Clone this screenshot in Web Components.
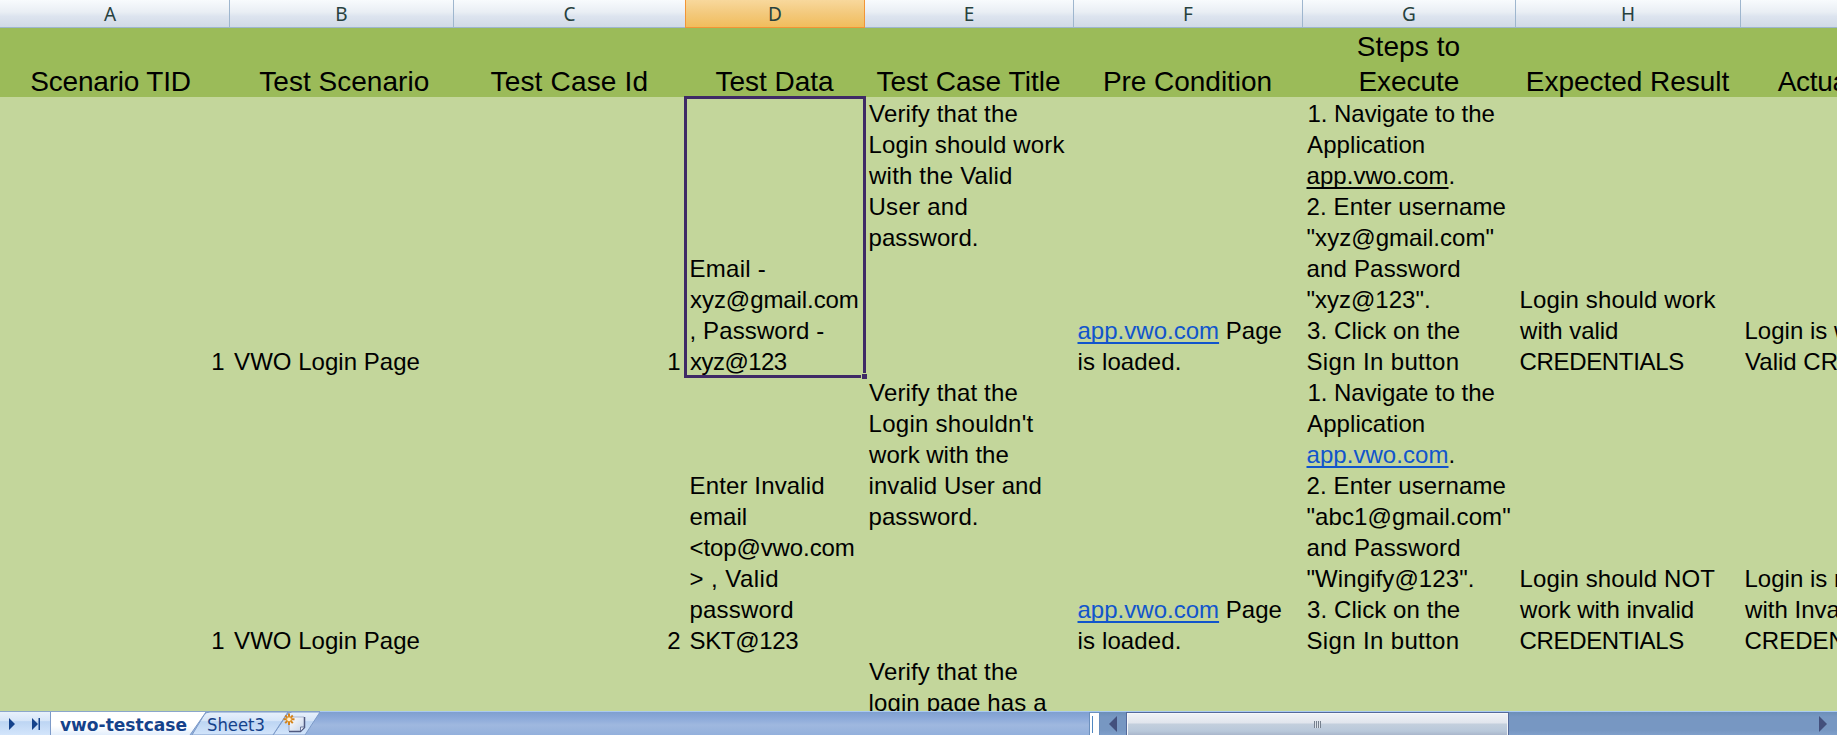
<!DOCTYPE html>
<html lang="en">
<head>
<meta charset="utf-8">
<title>vwo-testcase</title>
<style>
html, body { margin: 0; height: 100%; overflow: hidden; }
body { font-family: "Liberation Sans", Arial, sans-serif; color: #000; background: #c3d69b; }
</style>
</head>
<body>
<work-book>
  <sheet-row kind="columns">
    <column-head>A</column-head><column-head>B</column-head><column-head>C</column-head>
    <column-head active>D</column-head><column-head>E</column-head><column-head>F</column-head>
    <column-head>G</column-head><column-head>H</column-head><column-head></column-head>
  </sheet-row>
  <sheet-row kind="title">
    <grid-cell><fit-line w="159">Scenario TID</fit-line></grid-cell>
    <grid-cell><fit-line w="169.3" dx="2.3">Test Scenario</fit-line></grid-cell>
    <grid-cell><fit-line w="156" dx="-0.6">Test Case Id</fit-line></grid-cell>
    <grid-cell><fit-line w="118.5" dx="-1">Test Data</fit-line></grid-cell>
    <grid-cell><fit-line w="184" dx="-1">Test Case Title</fit-line></grid-cell>
    <grid-cell><fit-line w="165.7" dx="-1">Pre Condition</fit-line></grid-cell>
    <grid-cell><fit-line w="101.7" dx="-1">Steps to</fit-line><fit-line w="98.5" dx="-0.6">Execute</fit-line></grid-cell>
    <grid-cell><fit-line w="201.7" dx="-1">Expected Result</fit-line></grid-cell>
    <grid-cell><fit-line w="161" dx="-3">Actual Result</fit-line></grid-cell>
  </sheet-row>
  <sheet-row kind="body">
    <grid-cell align="right"><fit-line>1</fit-line></grid-cell>
    <grid-cell><fit-line w="185.5">VWO Login Page</fit-line></grid-cell>
    <grid-cell align="right"><fit-line>1</fit-line></grid-cell>
    <grid-cell selected><fit-line w="74.3">Email -</fit-line><fit-line w="167.7">xyz@gmail.com</fit-line><fit-line w="131.7" dx="1">, Password -</fit-line><fit-line w="96.7">xyz@123</fit-line></grid-cell>
    <grid-cell valign="top"><fit-line w="148.3">Verify that the</fit-line><fit-line w="196">Login should work</fit-line><fit-line w="143">with the Valid</fit-line><fit-line w="97">User and</fit-line><fit-line w="107.3">password.</fit-line></grid-cell>
    <grid-cell><fit-line w="203"><cell-link>app.vwo.com</cell-link> Page</fit-line><fit-line w="101.3">is loaded.</fit-line></grid-cell>
    <grid-cell><fit-line w="186" dx="1">1. Navigate to the</fit-line><fit-line w="116.7">Application</fit-line><fit-line w="146"><cell-link plain>app.vwo.com</cell-link>.</fit-line><fit-line w="198">2. Enter username</fit-line><fit-line w="186">"xyz@gmail.com"</fit-line><fit-line w="151.7">and Password</fit-line><fit-line w="121.4">"xyz@123".</fit-line><fit-line w="152.7">3. Click on the</fit-line><fit-line w="150.3">Sign In button</fit-line></grid-cell>
    <grid-cell><fit-line w="196">Login should work</fit-line><fit-line w="98">with valid</fit-line><fit-line w="162.7">CREDENTIALS</fit-line></grid-cell>
    <grid-cell><fit-line>Login is with</fit-line><fit-line>Valid CREDENTIALS</fit-line></grid-cell>
  </sheet-row>
  <sheet-row kind="body">
    <grid-cell align="right"><fit-line>1</fit-line></grid-cell>
    <grid-cell><fit-line w="185.5">VWO Login Page</fit-line></grid-cell>
    <grid-cell align="right"><fit-line>2</fit-line></grid-cell>
    <grid-cell><fit-line w="132.7">Enter Invalid</fit-line><fit-line w="55.3">email</fit-line><fit-line w="163.3">&lt;top@vwo.com</fit-line><fit-line w="86.7">&gt; , Valid</fit-line><fit-line w="101.7">password</fit-line><fit-line w="107.7">SKT@123</fit-line></grid-cell>
    <grid-cell valign="top"><fit-line w="148.3">Verify that the</fit-line><fit-line w="164">Login shouldn't</fit-line><fit-line w="140.3">work with the</fit-line><fit-line w="171">invalid User and</fit-line><fit-line w="107.3">password.</fit-line></grid-cell>
    <grid-cell><fit-line w="203"><cell-link>app.vwo.com</cell-link> Page</fit-line><fit-line w="101.3">is loaded.</fit-line></grid-cell>
    <grid-cell><fit-line w="186" dx="1">1. Navigate to the</fit-line><fit-line w="116.7">Application</fit-line><fit-line w="146"><cell-link>app.vwo.com</cell-link>.</fit-line><fit-line w="198">2. Enter username</fit-line><fit-line w="202.7">"abc1@gmail.com"</fit-line><fit-line w="151.7">and Password</fit-line><fit-line w="165.3">"Wingify@123".</fit-line><fit-line w="152.7">3. Click on the</fit-line><fit-line w="150.3">Sign In button</fit-line></grid-cell>
    <grid-cell><fit-line w="194.7">Login should NOT</fit-line><fit-line w="173.7">work with invalid</fit-line><fit-line w="162.7">CREDENTIALS</fit-line></grid-cell>
    <grid-cell><fit-line>Login is not</fit-line><fit-line>with Invalid</fit-line><fit-line>CREDENTIALS</fit-line></grid-cell>
  </sheet-row>
  <sheet-row kind="body">
    <grid-cell></grid-cell><grid-cell></grid-cell><grid-cell></grid-cell><grid-cell></grid-cell>
    <grid-cell valign="top"><fit-line w="148.3">Verify that the</fit-line><fit-line w="177.7">login page has a</fit-line></grid-cell>
  </sheet-row>
  <sheet-tabs slot="footer"></sheet-tabs>
  <scroll-strip slot="footer"></scroll-strip>
</work-book>

<script>
function define(name, html, setup) {
  const template = document.createElement('template');
  template.innerHTML = html;
  customElements.define(name, class extends HTMLElement {
    constructor() {
      super();
      this.attachShadow({ mode: 'open' }).append(template.content.cloneNode(true));
    }
    connectedCallback() { if (setup) setup(this); }
  });
}

define('work-book', `<style>
  :host { display: grid; grid-template-rows: 711px 24px; width: 1837px; height: 735px; overflow: hidden; }
  main { overflow: hidden; background: #c3d69b; }
  footer { display: grid; grid-template-columns: 1089px 1fr; min-width: 0; }
</style><main><slot></slot></main><footer><slot name="footer"></slot></footer>`);

define('sheet-row', `<style>
  :host { display: grid; margin-left: -9px; width: 1990px;
    grid-template-columns: 239px 224px 232px 179px 209px 229px 213px 225px 240px; }
  :host([kind="columns"]) { height: 28px; }
  :host([kind="title"]) { height: 69px; background: #9bbb59; font-size: 28px; line-height: 35px; text-align: center; --pad: 0; }
  :host([kind="body"]) { height: 279px; font-size: 24px; line-height: 31px; --pad: 5px; }
</style><slot></slot>`);

define('column-head', `<style>
  :host { box-sizing: border-box; height: 28px; text-align: center; color: #27413e;
    font: 19px/28px "Noto Sans", sans-serif; border-right: 1px solid #9eb6ce; border-bottom: 1px solid #9eb6ce;
    background: linear-gradient(#f8fbfd, #e9eef4 45%, #dde4ef 60%, #d1dae7); }
  :host([active]) { background: linear-gradient(#f8d89c, #f3c97c 50%, #f1bd5c); border-color: #f29536;
    margin-left: -1px; border-left: 1px solid #f29536; }
</style><slot></slot>`);

define('grid-cell', `<style>
  :host { position: relative; box-sizing: border-box; display: flex; flex-direction: column; justify-content: flex-end; padding: 0 var(--pad); min-width: 0; }
  :host([valign="top"]) { justify-content: flex-start; }
  :host([align="right"]) { text-align: right; }
  .frame, .handle { display: none; position: absolute; box-sizing: border-box; }
  :host([selected]) .frame { display: block; inset: -1px -1px -2px -2px; border: 3px solid #3f2a66; }
  :host([selected]) .handle { display: block; right: -3px; bottom: -4px; width: 7px; height: 7px; background: #3f2a66; border: 1px solid #c3d69b; }
</style><slot></slot><div class="frame"></div><div class="handle"></div>`);

define('cell-link', `<style>
  :host { display: inline; color: #1155cc; text-decoration: underline 2px; text-underline-offset: 3px; text-decoration-skip-ink: none; }
  :host([plain]) { color: #000; }
</style><slot></slot>`);

/* A single line whose letter spacing is tuned so that the inked width equals "w". */
const pen = document.createElement('canvas').getContext('2d');
define('fit-line', `<style>
  :host { display: block; white-space: pre; }
  span { position: relative; top: 1px; }
</style><span><slot></slot></span>`, el => {
  const css = getComputedStyle(el), text = el.textContent, span = el.shadowRoot.querySelector('span');
  const title = el.closest('sheet-row').getAttribute('kind') === 'title';
  pen.font = css.fontSize + ' "Liberation Sans"';
  const m = pen.measureText(text), ink = m.actualBoundingBoxRight + m.actualBoundingBoxLeft;
  const w = parseFloat(el.getAttribute('w')), dx = parseFloat(el.getAttribute('dx') || 0);
  if (w) span.style.letterSpacing = ((w - ink) / (text.length - 1)).toFixed(3) + 'px';
  if (title) span.style.left = dx + 'px';
  else if (css.textAlign === 'right') span.style.left = '-0.5px';
  else span.style.left = (dx - 0.5 + Math.min(-0.4, m.actualBoundingBoxLeft)) + 'px';
});

define('sheet-tabs', `<style>
  :host { display: block; height: 24px; overflow: hidden; background: linear-gradient(#a9c9f0 1px, #7f9fd0 1px, #8eabda 8px, #9fb8df 14px, #93b0dc); }
  svg { display: block; }
  text { font-family: "DejaVu Sans Condensed", "DejaVu Sans", sans-serif; font-stretch: condensed; font-size: 18px; fill: #15428b; }
</style>
<svg width="1089" height="24" viewBox="0 0 1089 24">
  <defs>
    <linearGradient id="nav" x2="0" y2="1"><stop offset="0" stop-color="#e8f1fc"/><stop offset=".38" stop-color="#d6e5f8"/><stop offset=".42" stop-color="#bdd5f3"/><stop offset="1" stop-color="#d3e5fb"/></linearGradient>
    <linearGradient id="on" x2="0" y2="1"><stop offset="0" stop-color="#fff"/><stop offset=".6" stop-color="#fff"/><stop offset="1" stop-color="#e3eefb"/></linearGradient>
    <linearGradient id="page" x2="1" y2="1"><stop offset="0" stop-color="#fff"/><stop offset="1" stop-color="#c5d3ea"/></linearGradient>
  </defs>
  <rect y="1" width="50" height="23" fill="url(#nav)"/>
  <path d="M0 .5H320" stroke="#8ba6cc"/>
  <path d="M9 7l6 6-6 6zM32 7l6 6-6 6zM38.500 7h1.500v12h-1.500z" fill="#15428b"/>
  <path d="M273 24L286 5Q288 1 292 1H320L305 24Z" fill="url(#nav)" stroke="#7c9ac8"/>
  <path d="M192 24L204 4Q206 1 210 1H288L273 24Z" fill="url(#nav)" stroke="#7c9ac8"/>
  <path d="M50.500 24V1H206L190 24Z" fill="url(#on)"/>
  <path d="M50.500 24V1M206 1L190 24" fill="none" stroke="#7c9ac8"/>
  <text x="60" y="20" font-weight="bold" textLength="127" lengthAdjust="spacingAndGlyphs">vwo-testcase</text>
  <text x="207" y="20" textLength="58" lengthAdjust="spacingAndGlyphs">Sheet3</text>
  <path d="M289 6H304.500V16.500L301 20H289Z" fill="url(#page)"/>
  <path d="M292 6H304" stroke="#a9b4cf"/>
  <path d="M304.500 6V16.500L300.500 20.500H289" fill="none" stroke="#505a80" stroke-width="1.500"/>
  <path d="M289 13V20" stroke="#8f9cc0"/>
  <path d="M304 16H300.500V20" fill="#eef3fb" stroke="#6b779c"/>
  <g stroke="#d4831c" stroke-width="2"><path d="M289 2.500V14M283.500 8.300H294.500M285.200 4.500L292.800 12.100M292.800 4.500L285.200 12.100"/></g>
  <circle cx="289" cy="8.300" r="2.400" fill="#fff3cf" stroke="#e09a35"/>
</svg>`);

define('scroll-strip', `<style>
  :host { box-sizing: border-box; display: grid; grid-template-columns: 11px 26px 383px 1fr; height: 24px;
    border-top: 1px solid #a9cbf2; background: linear-gradient(#6c8fb9, #7797c2 5px, #7797c2 18px, #7f9fca); }
  .split { box-sizing: border-box; border: 1px solid #6b8fbd; border-bottom: 0; background: #fff; padding: 3px 0 2px 2px; }
  .split::before { content: ""; display: block; width: 1px; height: 17px; background: #4f87c0; }
  .thumb { box-sizing: border-box; border: solid #54699a; border-width: 1px 1px 0; display: flex; justify-content: center; align-items: center;
    background: linear-gradient(#eff2f6, #e1e5ed 10px, #c3cfdd 11px, #b9c8da 18px, #a9b6cc); box-shadow: inset 1px 1px 0 #f6f8fb, inset -1px 0 0 #f1f4f8; }
  .grip { width: 7px; height: 7px; margin: 1px 1px 0 0; background: repeating-linear-gradient(90deg, #76808e 0 1px, #dde3eb 1px 2px); }
  .arrow { display: flex; align-items: center; }
  .arrow svg { display: block; }
  .left { justify-content: flex-start; padding-left: 9px; }
  .right { justify-content: flex-end; padding-right: 10px; }
</style>
<div class="split"></div>
<div class="arrow left"><svg width="8" height="16" viewBox="0 0 8 16"><path d="M8 0V16L0 8Z" fill="#43507d"/></svg></div>
<div class="thumb"><div class="grip"></div></div>
<div class="arrow right"><svg width="8" height="16" viewBox="0 0 8 16"><path d="M0 0V16L8 8Z" fill="#43507d"/></svg></div>`);
</script>
</body>
</html>
